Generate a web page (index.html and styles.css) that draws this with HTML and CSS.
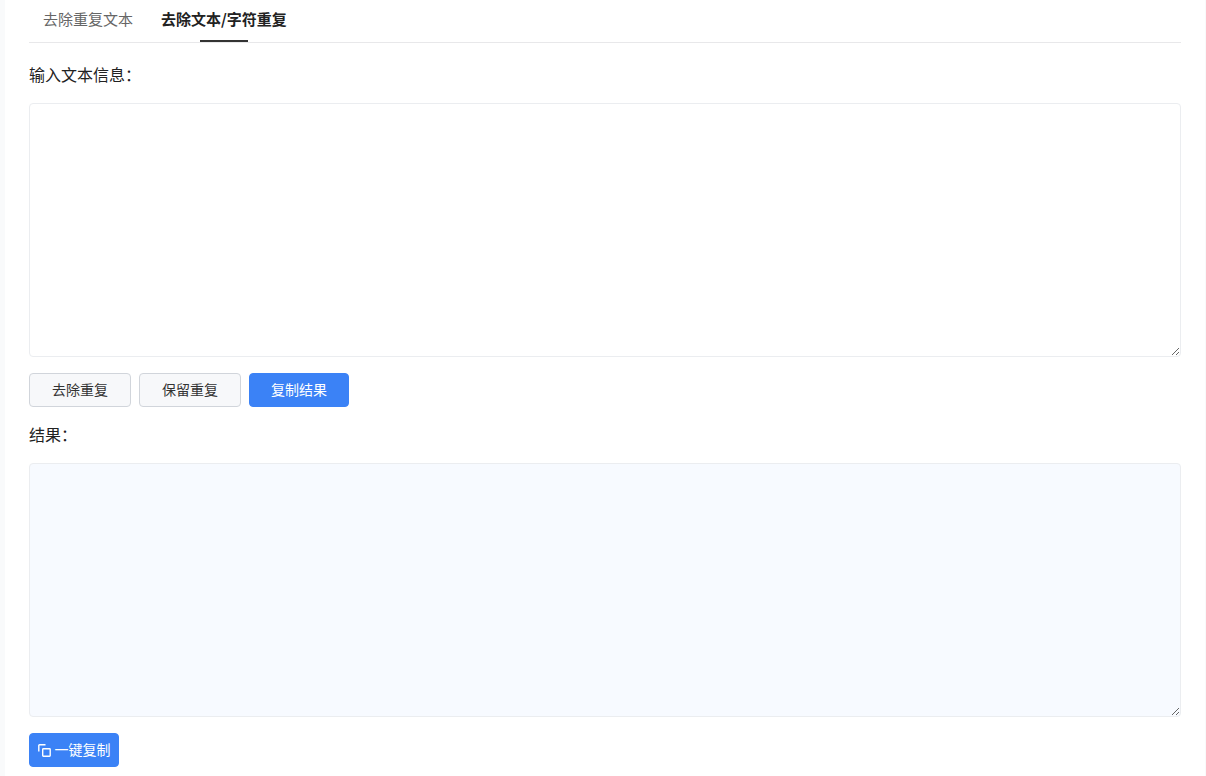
FILE: index.html
```html
<!DOCTYPE html>
<html lang="zh-CN">
<head>
<meta charset="utf-8">
<title>去除文本/字符重复</title>
<link rel="stylesheet" href="styles.css">
</head>
<body>
<main class="card">
  <nav class="tabs">
    <a class="tab">去除重复文本</a>
    <a class="tab tab-active">去除文本/字符重复</a>
  </nav>
  <label class="label label-first">输入文本信息：</label>
  <textarea class="area"></textarea>
  <div class="actions">
    <button class="btn btn-plain btn-w102">去除重复</button>
    <button class="btn btn-plain btn-w102">保留重复</button>
    <button class="btn btn-primary btn-w100">复制结果</button>
  </div>
  <label class="label">结果：</label>
  <textarea class="area area-result" readonly></textarea>
  <div class="actions">
    <button class="btn btn-primary btn-copy">
      <svg class="copy-icon" viewBox="0 0 13 13" fill="none" stroke="currentColor" stroke-width="1.4">
        <path d="M.8 7.500V1.500A.7.700 0 0 1 1.500 .8H7.500"/>
        <rect x="4.700" y="4.700" width="7.500" height="7.500" rx=".7"/>
      </svg>
      一键复制
    </button>
  </div>
</main>
</body>
</html>
```
FILE: styles.css
```css
* { box-sizing: border-box; }
html, body { height: 100%; }
body {
  margin: 0;
  padding: 0 1px 0 5px;
  background: #f9fafb;
  overflow: hidden;
  font-family: "Noto Sans CJK SC", "Liberation Sans", sans-serif;
  color: #222;
}
.card {
  background: #fff;
  height: 776px;
  padding: 0 24px;
  display: flex;
  flex-direction: column;
  align-items: stretch;
}
.tabs {
  display: flex;
  height: 43px;
  border-bottom: 1px solid #e8e8ea;
  padding-left: 14px;
  gap: 28px;
}
.tab {
  position: relative;
  font-size: 15px;
  line-height: 38px;
  color: #666;
  white-space: nowrap;
}
.tab-active {
  font-weight: 700;
  color: #222;
}
.tab-active::after {
  content: "";
  position: absolute;
  left: 39px;
  top: 40px;
  width: 48px;
  height: 2px;
  background: #333;
}
.label {
  display: block;
  font-size: 16px;
  line-height: 20px;
  height: 20px;
  margin-top: 17px;
  margin-bottom: 19px;
}
.label-first { margin-top: 21px; margin-bottom: 19px; }
.area {
  display: block;
  width: 100%;
  height: 254px;
  flex: none;
  margin: 0;
  border: 1px solid #ebedf0;
  border-radius: 4px;
  background: #fff;
  outline: none;
}
.area-result { background: #f7faff; }
.actions {
  display: flex;
  gap: 8px;
  margin-top: 16px;
}
.btn {
  height: 34px;
  padding: 0 0 2px;
  border-radius: 4px;
  font-family: inherit;
  font-size: 14px;
  display: flex;
  align-items: center;
  justify-content: center;
}
.btn-plain {
  background: #f7f8fa;
  border: 1px solid #d1d5db;
  color: #333;
}
.btn-primary {
  background: #3b82f6;
  border: 1px solid #3b82f6;
  color: #fff;
}
.btn-w102 { width: 102px; }
.btn-w100 { width: 100px; }
.btn-copy { width: 90px; gap: 4px; }
.copy-icon { width: 13px; height: 13px; flex: none; margin-top: 2px; }
```
